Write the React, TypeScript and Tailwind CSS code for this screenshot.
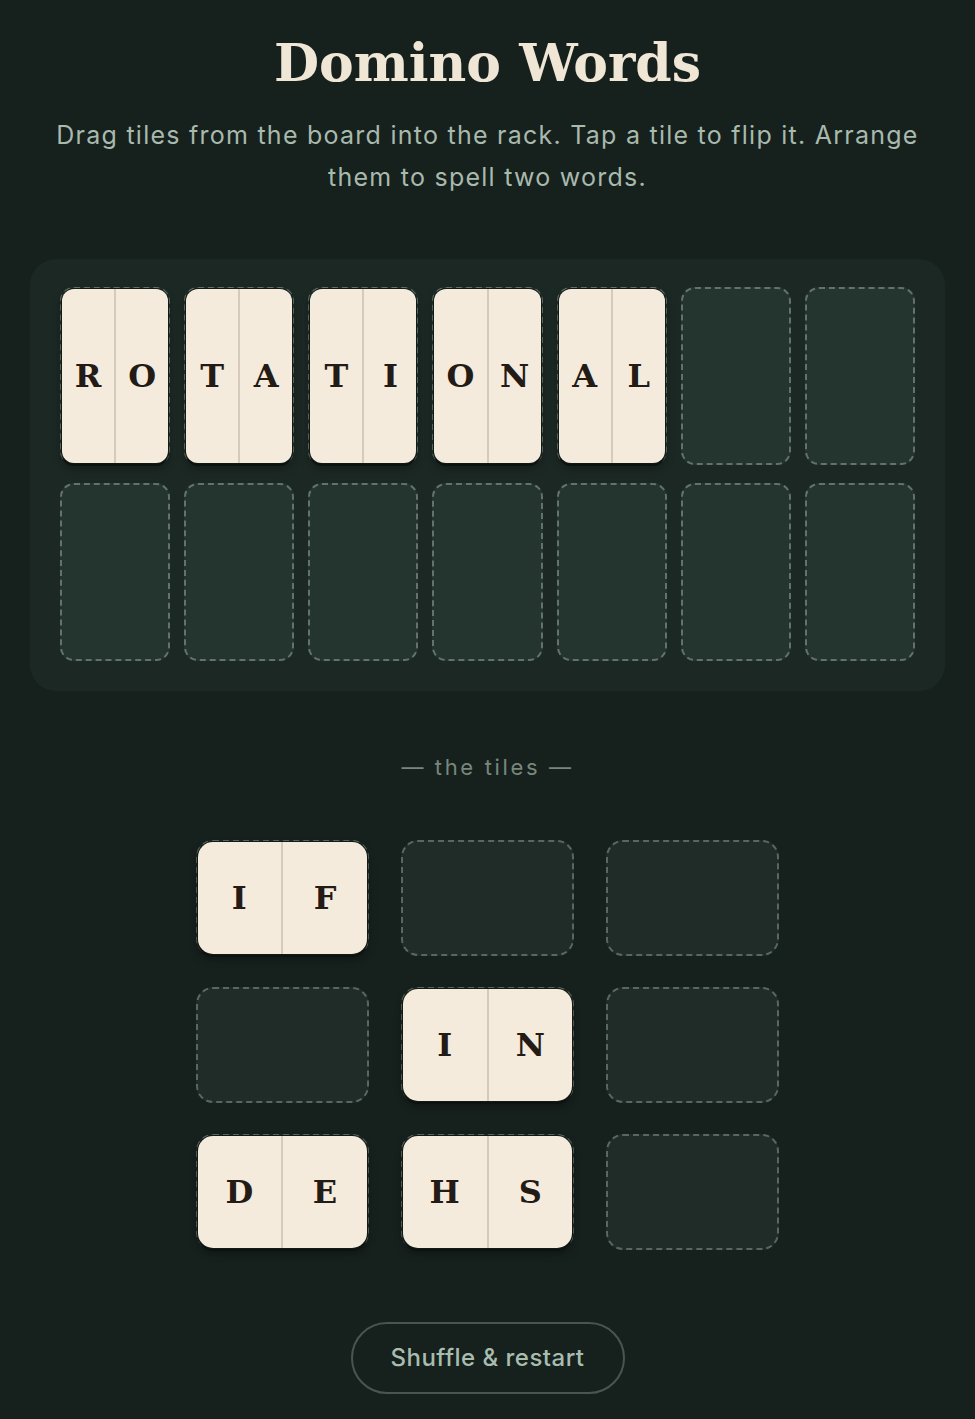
import React from "react";

const serif = { fontFamily: '"DejaVu Serif", "Liberation Serif", serif' };
const sans = { fontFamily: 'Inter, "Noto Sans", sans-serif' };

function VTile({ a, b, round }: { a: string; b: string; round: string }) {
  return (
    <div className={`flex h-full w-full ${round} bg-[#f5ebdd] shadow-[0_0_0_1px_#111a16,0_3px_0_#0c1210,0_5px_8px_rgba(0,0,0,0.35)] overflow-hidden`}>
      <div className="flex flex-1 items-center justify-center border-r-2 border-[#d5cabb]">
        <span className="text-[32px] font-bold text-[#231b15]" style={serif}>{a}</span>
      </div>
      <div className="flex flex-1 items-center justify-center">
        <span className="text-[32px] font-bold text-[#231b15]" style={serif}>{b}</span>
      </div>
    </div>
  );
}

function BoardSlot({ tile }: { tile?: [string, string] }) {
  return (
    <div className="h-[178px] rounded-[14px] border-2 border-dashed border-[#63736a] bg-[#24342e]">
      {tile && <VTile a={tile[0]} b={tile[1]} round="rounded-[12px]" />}
    </div>
  );
}

function RackSlot({ tile }: { tile?: [string, string] }) {
  return (
    <div className="h-[116px] rounded-[17px] border-2 border-dashed border-[#58685f] bg-[#202c28]">
      {tile && <VTile a={tile[0]} b={tile[1]} round="rounded-[15px]" />}
    </div>
  );
}

export default function App() {
  const board: ([string, string] | undefined)[] = [
    ["R", "O"],
    ["T", "A"],
    ["T", "I"],
    ["O", "N"],
    ["A", "L"],
    undefined,
    undefined,
    undefined,
    undefined,
    undefined,
    undefined,
    undefined,
    undefined,
    undefined,
  ];
  const rack: ([string, string] | undefined)[] = [
    ["I", "F"],
    undefined,
    undefined,
    undefined,
    ["I", "N"],
    undefined,
    ["D", "E"],
    ["H", "S"],
    undefined,
  ];
  return (
    <div className="min-h-[1419px] w-full bg-[#16201c] px-[30px] pt-[30px] pb-[26px]">
      <h1 className="text-center text-[52px] font-bold leading-[66px] text-[#efe6d6]" style={serif}>
        Domino Words
      </h1>
      <p
        className="mx-auto mt-[18px] max-w-[880px] text-center text-[25px] leading-[42px] tracking-[0.05em] text-[#a8b9ae]"
        style={sans}
      >
        Drag tiles from the board into the rack. Tap a tile to flip it. Arrange them to spell two words.
      </p>
      <div className="mt-[61px] rounded-[26px] bg-[#1c2824] px-[30px] pt-[28px] pb-[30px]">
        <div className="grid grid-cols-7 gap-x-[14px] gap-y-[18px]">
          {board.map((t, i) => (
            <BoardSlot key={i} tile={t} />
          ))}
        </div>
      </div>
      <div
        className="mt-[60px] text-center text-[22px] tracking-[0.12em] text-[#78877e]"
        style={sans}
      >
        — the tiles —
      </div>
      <div className="mx-auto mt-[56px] grid w-[584px] grid-cols-3 gap-x-[32px] gap-y-[31px]">
        {rack.map((t, i) => (
          <RackSlot key={i} tile={t} />
        ))}
      </div>
      <div className="mt-[72px] flex justify-center">
        <button
          className="h-[72px] w-[274px] rounded-full border-2 border-[#49564f] text-[24px] font-medium tracking-[0.02em] text-[#a9bcb0]"
          style={sans}
        >
          Shuffle &amp; restart
        </button>
      </div>
    </div>
  );
}
